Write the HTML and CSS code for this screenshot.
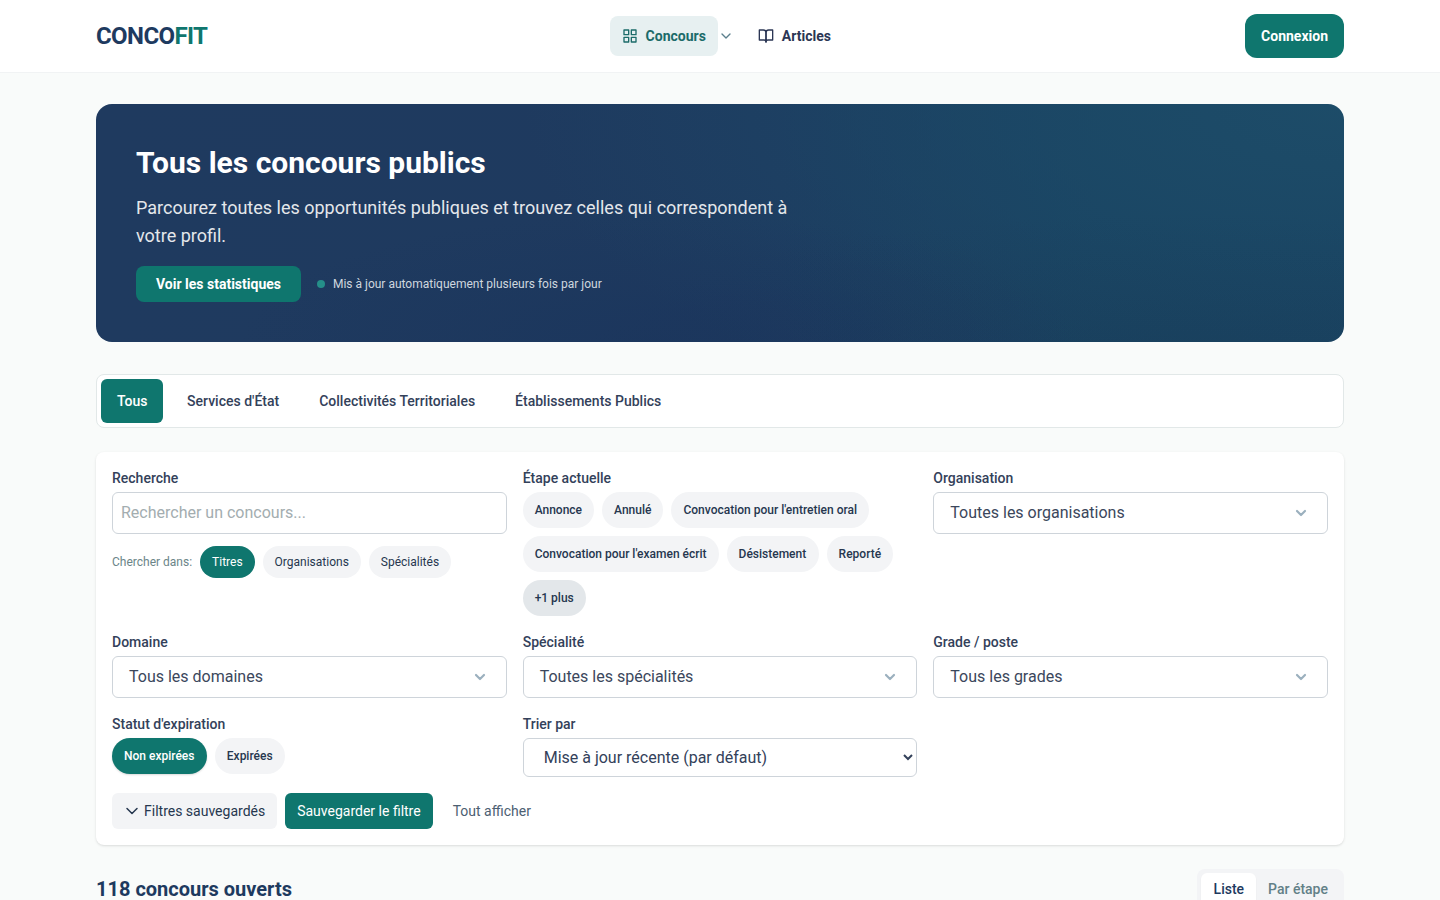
FILE: index.html
```html
<!DOCTYPE html>
<html lang="fr">
<head>
<meta charset="utf-8">
<title>Concofit – Tous les concours publics</title>
<link rel="stylesheet" href="styles.css">
</head>
<body>
<header class="header">
  <div class="container header-inner">
    <a class="logo">CONCO<span class="logo-accent">FIT</span></a>
    <nav class="nav">
      <a class="nav-link active">
        <svg class="icon" viewBox="0 0 24 24"><rect x="3" y="3" width="7" height="7"/><rect x="14" y="3" width="7" height="7"/><rect x="14" y="14" width="7" height="7"/><rect x="3" y="14" width="7" height="7"/></svg>
        Concours
      </a>
      <svg class="icon nav-chevron" viewBox="0 0 24 24"><path d="M6 9l6 6 6-6"/></svg>
      <a class="nav-link">
        <svg class="icon" viewBox="0 0 24 24"><path d="M2 3h6a4 4 0 0 1 4 4v14a3 3 0 0 0-3-3H2z"/><path d="M22 3h-6a4 4 0 0 0-4 4v14a3 3 0 0 1 3-3h7z"/></svg>
        Articles
      </a>
    </nav>
    <a class="login">Connexion</a>
  </div>
</header>
<main class="container main">
  <section class="hero">
    <h1 class="hero-title">Tous les concours publics</h1>
    <p class="hero-text">Parcourez toutes les opportunités publiques et trouvez celles qui correspondent à votre profil.</p>
    <div class="hero-actions">
      <a class="hero-button">Voir les statistiques</a>
      <span class="hero-note"><i class="dot"></i>Mis à jour automatiquement plusieurs fois par jour</span>
    </div>
  </section>
  <nav class="tabs">
    <button class="tab selected">Tous</button>
    <button class="tab">Services d'État</button>
    <button class="tab">Collectivités Territoriales</button>
    <button class="tab">Établissements Publics</button>
  </nav>
  <section class="filters">
    <div class="grid">
      <div class="field">
        <label class="label">Recherche</label>
        <input class="search" type="text" placeholder="Rechercher un concours...">
        <div class="scope">
          <span class="scope-label">Chercher dans:</span>
          <button class="chip on">Titres</button>
          <button class="chip">Organisations</button>
          <button class="chip">Spécialités</button>
        </div>
      </div>
      <div class="field">
        <label class="label">Étape actuelle</label>
        <div class="pills">
          <button class="pill">Annonce</button>
          <button class="pill">Annulé</button>
          <button class="pill">Convocation pour l'entretien oral</button>
          <button class="pill">Convocation pour l'examen écrit</button>
          <button class="pill wide">Désistement</button>
          <button class="pill">Reporté</button>
          <button class="pill more">+1 plus</button>
        </div>
      </div>
      <div class="field">
        <label class="label">Organisation</label>
        <div class="combo">Toutes les organisations<svg class="icon combo-icon" viewBox="0 0 16 16"><path d="M4 6l4 4 4-4"/></svg></div>
      </div>
      <div class="field">
        <label class="label">Domaine</label>
        <div class="combo">Tous les domaines<svg class="icon combo-icon" viewBox="0 0 16 16"><path d="M4 6l4 4 4-4"/></svg></div>
      </div>
      <div class="field">
        <label class="label">Spécialité</label>
        <div class="combo">Toutes les spécialités<svg class="icon combo-icon" viewBox="0 0 16 16"><path d="M4 6l4 4 4-4"/></svg></div>
      </div>
      <div class="field">
        <label class="label">Grade / poste</label>
        <div class="combo">Tous les grades<svg class="icon combo-icon" viewBox="0 0 16 16"><path d="M4 6l4 4 4-4"/></svg></div>
      </div>
      <div class="field">
        <label class="label">Statut d'expiration</label>
        <div class="pills">
          <button class="pill wide on">Non expirées</button>
          <button class="pill">Expirées</button>
        </div>
      </div>
      <div class="field">
        <label class="label">Trier par</label>
        <select class="sort"><option>Mise à jour récente (par défaut)</option></select>
      </div>
    </div>
    <div class="actions">
      <a class="action saved"><svg class="icon saved-icon" viewBox="0 0 16 16"><path d="M3 5.5l5 5 5-5"/></svg>Filtres sauvegardés</a>
      <a class="action save">Sauvegarder le filtre</a>
      <a class="action show-all">Tout afficher</a>
    </div>
  </section>
  <div class="results-head">
    <h2 class="results-title">118 concours ouverts</h2>
    <div class="toggle">
      <span class="toggle-item current">Liste</span>
      <span class="toggle-item">Par étape</span>
    </div>
  </div>
</main>
</body>
</html>
```

FILE: styles.css
```css
* { box-sizing: border-box; }
html, body { height: 100%; }
body {
  margin: 0;
  overflow: hidden;
  background: #f9fbfa;
  color: #1e3a5f;
  font-family: Roboto, sans-serif;
  font-size: 16px;
  line-height: 24px;
}
button { margin: 0; border: 0; background: none; font-family: inherit; }
.container { width: 1248px; margin: 0 auto; }
.header { background: #fff; border-bottom: 1px solid #f1f3f4; }
.header-inner { display: flex; align-items: center; justify-content: space-between; height: 72px; }
.logo { font-size: 24px; line-height: 32px; font-weight: 700; letter-spacing: -0.6px; color: #1e3a5f; }
.logo-accent { color: #0f766e; }
.icon { width: 16px; height: 16px; flex: none; fill: none; stroke: currentColor; stroke-width: 2; stroke-linecap: round; stroke-linejoin: round; }
.nav { display: flex; align-items: center; }
.nav-link { display: flex; align-items: center; gap: 8px; height: 40px; padding: 0 12px; border-radius: 8px; font-size: 14px; font-weight: 700; color: #2b3654; }
.nav-link.active { background: #e7f0f1; color: #1b6b69; }
.nav-chevron { width: 16px; margin-right: 12px; color: #5b7f8d; }
.login { height: 44px; padding: 0 16px; border-radius: 12px; background: #0f766e; color: #fff; font-size: 14px; font-weight: 700; line-height: 44px; }
.main { padding-top: 31px; }
.hero {
  height: 238px;
  padding: 40px;
  border-radius: 16px;
  color: #fff;
  background:
    radial-gradient(ellipse 420px 130px at 45% 100%, rgba(26, 52, 92, 0.6), transparent 100%),
    radial-gradient(ellipse 620px 130px at 88% 100%, rgba(22, 52, 80, 0.2), transparent 100%),
    radial-gradient(ellipse 820px 360px at 100% 0%, rgba(30, 80, 108, 0.75) 0%, rgba(27, 76, 106, 0.55) 45%, transparent 100%),
    linear-gradient(90deg, #1f3a5f 0%, #1e3a5f 55%, #1a405e 80%);
}
.hero-title { margin: 0; font-size: 30px; line-height: 38px; font-weight: 700; }
.hero-text { width: 672px; margin: 12px 0 16px; font-size: 18px; line-height: 28px; color: #e4e7eb; }
.hero-actions { display: flex; align-items: center; gap: 16px; }
.hero-button { height: 36px; padding: 0 20px; border-radius: 8px; background: #0f766e; font-size: 14px; font-weight: 700; line-height: 36px; }
.hero-note { display: flex; align-items: center; gap: 8px; font-size: 12px; line-height: 16px; color: #cfd7df; }
.dot { width: 8px; height: 8px; border-radius: 50%; background: #258f89; }
.tabs { display: flex; gap: 8px; margin-top: 32px; padding: 4px; border: 1px solid #e2e8e8; border-radius: 8px; background: #fff; }
.tab { padding: 0 16px; border-radius: 6px; font-size: 14px; font-weight: 500; line-height: 44px; color: #33415a; }
.tab.selected { padding-right: 15.6px; background: #0f766e; color: #fff; }
.filters { margin-top: 24px; padding: 16px; border-radius: 8px; background: #fff; box-shadow: 0 1px 3px rgba(0, 0, 0, 0.1), 0 1px 2px -1px rgba(0, 0, 0, 0.1); }
.grid { display: grid; grid-template-columns: repeat(3, minmax(0, 1fr)); gap: 16px; }
.label { display: block; margin-bottom: 4px; font-size: 14px; line-height: 20px; font-weight: 500; color: #33415a; }
.search { display: block; width: 100%; height: 42px; padding: 0 8px 2px; border: 1px solid #ced4da; border-radius: 6px; background: #fff; font: 16px/24px Roboto, sans-serif; }
.search::placeholder { color: #a3adb0; }
.scope { display: flex; align-items: center; gap: 8px; margin-top: 12px; font-size: 12px; line-height: 16px; }
.scope-label { color: #6b8588; }
.chip { padding: 8px 12px; border-radius: 16px; background: #f3f4f6; color: #26374f; font-size: 12px; line-height: 16px; }
.pills { display: flex; flex-wrap: wrap; gap: 8px; }
.pill { padding: 10px 12px; border-radius: 18px; background: #f3f4f6; color: #26374f; font-size: 12px; line-height: 16px; font-weight: 500; }
.pill.wide { padding-right: 12.4px; }
.pill.more { background: #e3e7ea; }
.chip.on, .pill.on { background: #0f766e; color: #fff; }
.pill.on { box-shadow: 0 1px 2px rgba(0, 0, 0, 0.15); }
.combo { display: flex; align-items: center; justify-content: space-between; height: 42px; padding: 0 18px 0 16px; border: 1px solid #ced4da; border-radius: 6px; color: #3b475c; }
.combo-icon { stroke-width: 2.2; color: #9bb0be; }
.sort { display: block; width: 100%; height: 39px; padding: 0 0 0 16px; border: 1px solid #ced4da; border-radius: 6px; background: #fff; color: #33415a; font: 16px/24px Roboto, sans-serif; }
.actions { display: flex; gap: 8px; margin-top: 16px; }
.action { display: flex; align-items: center; gap: 4px; height: 36px; padding: 0 12px; border-radius: 6px; font-size: 14px; line-height: 20px; }
.action.saved { background: #f3f4f6; color: #26374f; }
.saved-icon { stroke-width: 1.5; }
.action.save { background: #0f766e; color: #fff; }
.action.show-all { color: #4c6072; }
.results-head { display: flex; align-items: center; justify-content: space-between; margin-top: 24px; }
.results-title { margin: 0; font-size: 20px; line-height: 28px; font-weight: 700; }
.toggle { display: flex; padding: 4px; border-radius: 8px; background: #f3f4f6; }
.toggle-item { padding: 6px 12px; border-radius: 6px; font-size: 14px; line-height: 20px; font-weight: 500; color: #628087; }
.toggle-item.current { padding-left: 12.4px; background: #fff; color: #1e3a5f; box-shadow: 0 1px 2px rgba(0, 0, 0, 0.06); }
```
